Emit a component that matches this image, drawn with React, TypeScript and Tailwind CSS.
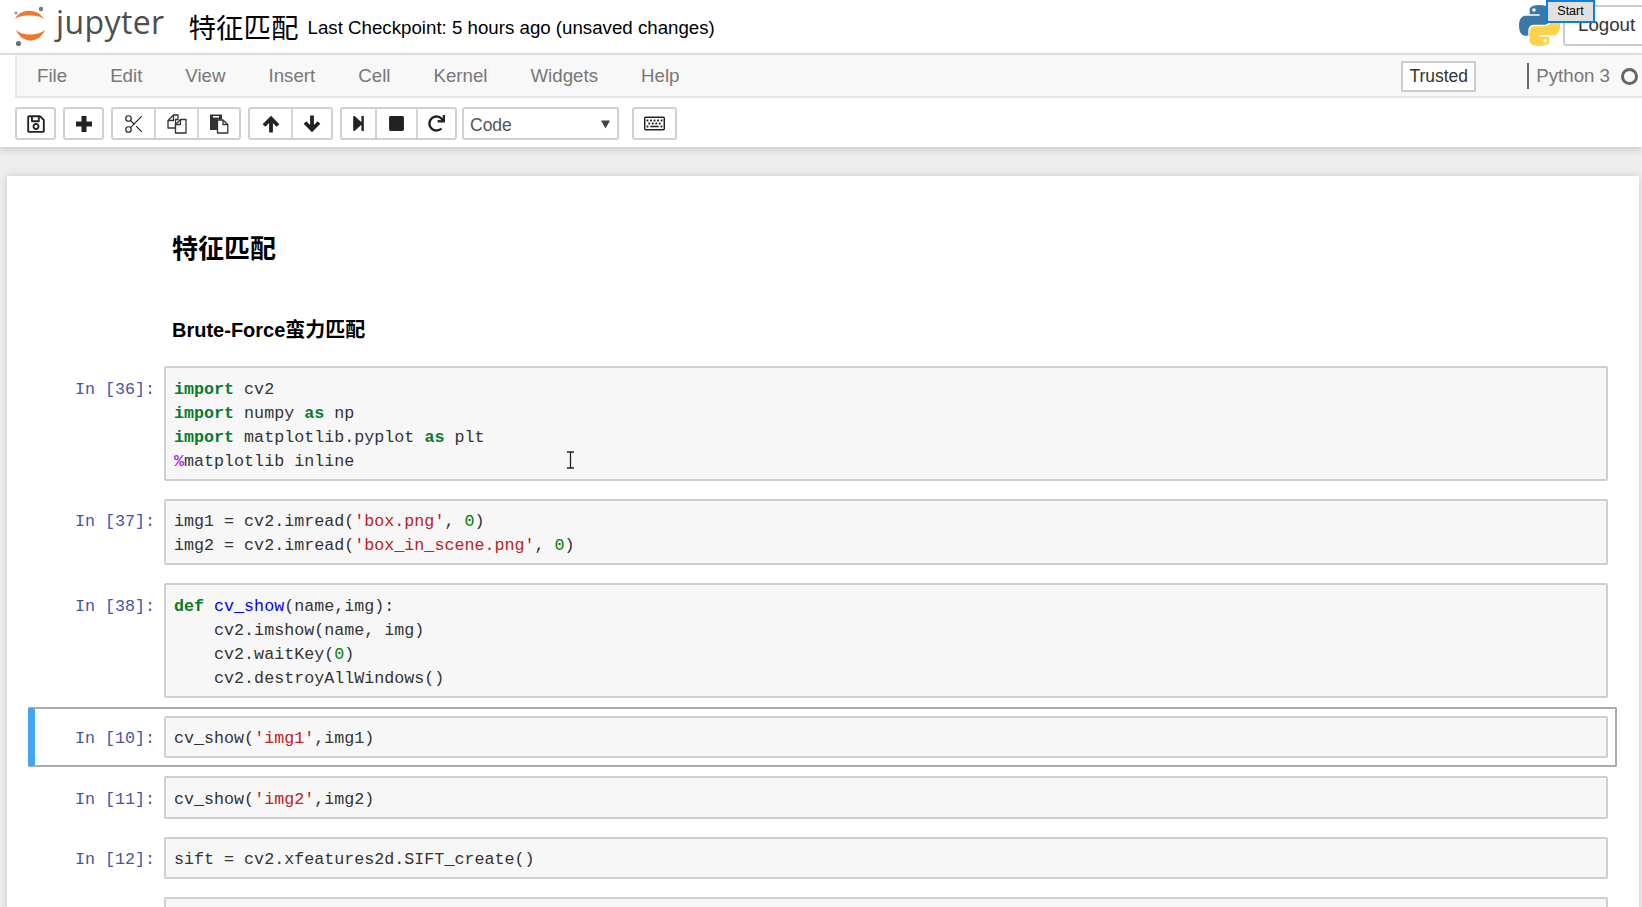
import { ReactNode } from "react";
import { FaRedo, FaRegKeyboard, FaRegSave, FaStepForward, FaStop } from "react-icons/fa";
import { Scissors } from "lucide-react";

const JupyterLogo = () => (
  <svg viewBox="0 0 36 44" className="w-[36px] h-[44px] shrink-0">
    <path d="M3 14 C8 3 26 3 32 14 C25 9 10 9 3 14 Z" fill="#f37726" />
    <path d="M4 25 C10 31 26 31 33 25 C27 39 10 39 4 25 Z" fill="#f37726" />
    <circle cx="29" cy="4" r="2.2" fill="#767677" />
    <circle cx="4" cy="8" r="1.6" fill="#989798" />
    <circle cx="6.5" cy="38.5" r="2.6" fill="#6f7070" />
  </svg>
);

const PythonLogo = () => (
  <svg viewBox="0 0 110 110" className="w-[41px] h-[41px] shrink-0">
    <path
      d="M54.9 0 C26.8 0 28.6 12.2 28.6 12.2 L28.6 24.8 H55.4 V28.6 H17.9 C17.9 28.6 0 26.6 0 54.9 C0 83.2 15.7 82.2 15.7 82.2 H25 V69 C25 69 24.5 53.3 40.4 53.3 H67 C67 53.3 81.9 53.5 81.9 38.9 V14.7 C81.9 14.7 84.2 0 54.9 0 Z M40.1 8.5 a4.8 4.8 0 1 1 0 9.6 a4.8 4.8 0 1 1 0 -9.6 z"
      fill="#3b78a8"
      fillRule="evenodd"
    />
    <g transform="rotate(180 55 55)">
      <path
        d="M54.9 0 C26.8 0 28.6 12.2 28.6 12.2 L28.6 24.8 H55.4 V28.6 H17.9 C17.9 28.6 0 26.6 0 54.9 C0 83.2 15.7 82.2 15.7 82.2 H25 V69 C25 69 24.5 53.3 40.4 53.3 H67 C67 53.3 81.9 53.5 81.9 38.9 V14.7 C81.9 14.7 84.2 0 54.9 0 Z M40.1 8.5 a4.8 4.8 0 1 1 0 9.6 a4.8 4.8 0 1 1 0 -9.6 z"
        fill="#fdd34b"
        fillRule="evenodd"
      />
    </g>
  </svg>
);

const CopyIcon = () => (
  <svg viewBox="0 0 20 20" className="w-[20px] h-[20px]" fill="none" stroke="#333" strokeWidth="1.3" strokeLinejoin="round">
    <path d="M6.5 1 H11 V5.5 H8.5 V14 H1 V6.5 Z" />
    <path d="M6.5 1 V6.5 H1" />
    <path d="M13.5 5.5 H19 V19 H8.5 V10.5 Z" fill="#fff" />
    <path d="M13.5 5.5 V10.5 H8.5" />
  </svg>
);

const PasteIcon = () => (
  <svg viewBox="0 0 20 20" className="w-[20px] h-[20px]">
    <path d="M1 0.5 H13 V5.5 H8 V16 H1 Z" fill="#333" />
    <rect x="4" y="2" width="6" height="1.6" fill="#fff" />
    <path d="M8.5 6 H14 L18.8 10.5 V19 H8.5 Z" fill="#fff" stroke="#333" strokeWidth="1.3" strokeLinejoin="round" />
    <path d="M14 6 V10.5 H18.8" fill="none" stroke="#333" strokeWidth="1.3" />
  </svg>
);

const PlusIcon = () => (
  <svg viewBox="0 0 18 18" className="w-[18px] h-[18px]">
    <path d="M1 9 H17 M9 1 V17" stroke="#222" strokeWidth="5" />
  </svg>
);

const ArrowIcon = ({ down }: { down?: boolean }) => (
  <svg viewBox="0 0 18 18" className={`w-[18px] h-[18px] ${down ? "rotate-180" : ""}`} fill="none" stroke="#222" strokeWidth="3.8">
    <path d="M2 10.5 L9 3.5 L16 10.5 M9 4 V17.5" />
  </svg>
);

const Btn = ({ w, children, divider }: { w: string; children: ReactNode; divider?: boolean }) => (
  <div className={`${w} h-full flex items-center justify-center text-[#222] ${divider ? "border-l-2 border-[#d4d4d4]" : ""}`}>
    {children}
  </div>
);

const Group = ({ children }: { children: ReactNode }) => (
  <div className="flex h-full bg-white border-2 border-[#d0d0d0] rounded-[3px]">{children}</div>
);

const K = ({ children }: { children: ReactNode }) => <span className="text-[#0a7a2a] font-bold">{children}</span>;
const S = ({ children }: { children: ReactNode }) => <span className="text-[#ba2121]">{children}</span>;
const N = ({ children }: { children: ReactNode }) => <span className="text-[#008000]">{children}</span>;

const Cell = ({ n, selected, lines }: { n?: string; selected?: boolean; lines: ReactNode[] }) => (
  <div
    className={`flex py-[7px] pr-[7px] border-2 rounded-[2px] ${
      selected ? "border-[#ababab] border-l-[7px] border-l-[#42a5f5] pl-0" : "border-transparent border-l-[7px]"
    }`}
  >
    <div className="w-[129px] shrink-0 pt-[11.5px] pr-[9px] text-right text-[#4556a8] leading-[24px]">{n ? `In [${n}]:` : ""}</div>
    <div className="flex-1 bg-[#f7f7f7] border-2 border-[#cfcfcf] rounded-[2px] pt-[9.5px] pb-[5px] pl-[8px] text-[#333] leading-[24px] whitespace-pre">
      {lines.map((line, i) => (
        <div key={i}>{line}</div>
      ))}
    </div>
  </div>
);

const menus = ["File", "Edit", "View", "Insert", "Cell", "Kernel", "Widgets", "Help"];

export default function App() {
  return (
    <div className="relative w-[1642px] h-[907px] overflow-hidden bg-[#eeeeee] font-['Liberation_Sans','Noto_Sans_CJK_SC',sans-serif]">
      {/* header */}
      <div className="h-[55px] bg-white border-b-2 border-[#e7e7e7] flex items-center pl-[12px] overflow-hidden">
        <JupyterLogo />
        <span className="ml-[8px] text-[32px] leading-none text-[#4e4e4e] font-['Open_Sans',sans-serif] tracking-[0.4px] -mt-[9px]">jupyter</span>
        <span className="ml-[24px] text-[27.5px] leading-none text-black font-['Noto_Sans_CJK_SC',sans-serif]">特征匹配</span>
        <span className="ml-[9px] mt-[4px] text-[18.7px] text-black">Last Checkpoint: 5 hours ago (unsaved changes)</span>
        <div className="ml-auto flex items-center -mr-[20px] -mt-[3px]">
          <PythonLogo />
          <div className="ml-[3px] w-[99px] h-[41px] border-2 border-[#ccc] rounded-l-[3px] pl-[13px] text-[18.7px] leading-[35px] text-[#333]">Logout</div>
        </div>
      </div>

      {/* toolbar area */}
      <div className="h-[92px] bg-white shadow-[0_2px_8px_rgba(0,0,0,0.18)] relative">
        <div className="ml-[15px] h-[43px] bg-[#f8f8f8] border-l-2 border-b-2 border-[#e7e7e7] flex items-center pl-[20px] text-[18.7px] text-[#777]">
          <div className="flex gap-[43px] mt-[1px]">
            {menus.map((m) => (
              <span key={m}>{m}</span>
            ))}
          </div>
          <div className="ml-auto flex items-center mt-[1px]">
            <div className="w-[75px] h-[31px] border-2 border-[#ccc] bg-white text-[#333] text-[17.5px] leading-[27px] text-center">Trusted</div>
            <div className="ml-[51px] w-[2px] h-[26px] bg-[#666]" />
            <span className="ml-[7px]">Python 3</span>
            <div className="ml-[11px] mr-[4px] w-[17px] h-[17px] rounded-full border-[3px] border-[#666]" />
          </div>
        </div>
        <div className="mt-[9px] ml-[15px] h-[33px] flex">
          <Group><Btn w="w-[37px]"><FaRegSave size={20} /></Btn></Group>
          <div className="w-[7px]" />
          <Group><Btn w="w-[37px]"><PlusIcon /></Btn></Group>
          <div className="w-[7px]" />
          <Group>
            <Btn w="w-[41px]"><Scissors size={22} strokeWidth={1.3} /></Btn>
            <Btn w="w-[43px]" divider><CopyIcon /></Btn>
            <Btn w="w-[42px]" divider><PasteIcon /></Btn>
          </Group>
          <div className="w-[7px]" />
          <Group>
            <Btn w="w-[41px]"><ArrowIcon /></Btn>
            <Btn w="w-[40px]" divider><ArrowIcon down /></Btn>
          </Group>
          <div className="w-[7px]" />
          <Group>
            <Btn w="w-[33px]"><FaStepForward size={17} /></Btn>
            <Btn w="w-[41px]" divider><FaStop size={17} /></Btn>
            <Btn w="w-[39px]" divider><FaRedo size={17} /></Btn>
          </Group>
          <div className="w-[5px]" />
          <div className="w-[157px] h-full bg-white border-2 border-[#d0d0d0] rounded-[3px] flex items-center pl-[6px] pr-[7px] text-[17.5px] text-[#555]">
            <span className="mt-[3px]">Code</span>
            <svg viewBox="0 0 10 10" className="ml-auto w-[9px] h-[10px]"><path d="M0 1 H10 L5 10 Z" fill="#444" /></svg>
          </div>
          <div className="w-[13px]" />
          <Group><Btn w="w-[41px]"><FaRegKeyboard size={21} /></Btn></Group>
        </div>
      </div>

      {/* notebook */}
      <div className="mt-[29px] ml-[7px] mr-[3px] h-[800px] bg-white shadow-[0_0_8px_rgba(0,0,0,0.15)] pl-[21px] pr-[22px]">
        <div className="pl-[144px] pt-[57px] pb-[15px] text-black font-bold">
          <h1 className="text-[26px] leading-[32px]">特征匹配</h1>
          <h2 className="mt-[53px] text-[20px] leading-[24px]">Brute-Force蛮力匹配</h2>
        </div>
        <div className="font-['Liberation_Mono',monospace] text-[16.7px]">
          <Cell
            n="36"
            lines={[
              <><K>import</K> cv2</>,
              <><K>import</K> numpy <K>as</K> np</>,
              <><K>import</K> matplotlib.pyplot <K>as</K> plt</>,
              <><span className="text-[#aa22ff] font-bold">%</span>matplotlib inline</>,
            ]}
          />
          <Cell
            n="37"
            lines={[
              <>img1 = cv2.imread(<S>'box.png'</S>, <N>0</N>)</>,
              <>img2 = cv2.imread(<S>'box_in_scene.png'</S>, <N>0</N>)</>,
            ]}
          />
          <Cell
            n="38"
            lines={[
              <><K>def</K> <span className="text-[#0000ff]">cv_show</span>(name,img):</>,
              <>    cv2.imshow(name, img)</>,
              <>    cv2.waitKey(<N>0</N>)</>,
              <>    cv2.destroyAllWindows()</>,
            ]}
          />
          <Cell n="10" selected lines={[<>cv_show(<S>'img1'</S>,img1)</>]} />
          <Cell n="11" lines={[<>cv_show(<S>'img2'</S>,img2)</>]} />
          <Cell n="12" lines={[<>sift = cv2.xfeatures2d.SIFT_create()</>]} />
          <Cell lines={[<> </>]} />
        </div>
      </div>

      {/* screen overlays */}
      <div className="absolute left-[1546px] top-0 w-[49px] h-[23px] border-2 border-[#0f7fdc] bg-[#e1e1e1] text-[12.5px] leading-[19px] text-center text-black">
        Start
      </div>
      <svg viewBox="0 0 9 18" className="absolute left-[566px] top-[451px] w-[9px] h-[18px]" fill="none" stroke="#222" strokeWidth="1.3">
        <path d="M1 1 H8 M1 17 H8 M4.5 1 V17" />
      </svg>
    </div>
  );
}
